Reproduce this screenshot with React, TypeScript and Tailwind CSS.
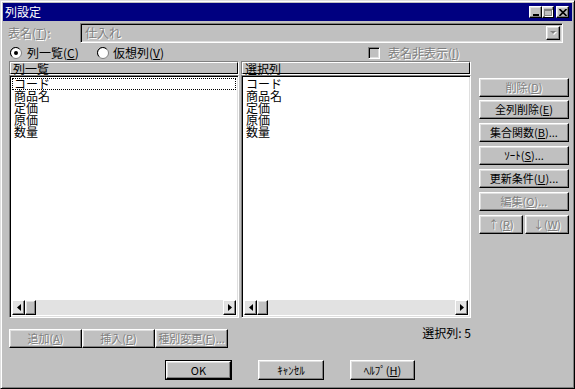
import React from "react";

const font = "font-['Noto_Sans_CJK_JP','Noto_Sans',sans-serif]";
const raised =
  "border border-t-white border-l-white border-b-black border-r-black shadow-[inset_-1px_-1px_#808080,inset_1px_1px_#dfdfdf]";
const sunken =
  "border border-t-[#808080] border-l-[#808080] border-b-white border-r-white shadow-[inset_1px_1px_#000,inset_-1px_-1px_#dfdfdf]";
const grayText = "text-[#808080] [text-shadow:1px_1px_0_#fff]";

type Label = { text: string; k?: string; tail?: string };

const Acc = ({ text, k, tail }: Label) => (
  <span className="whitespace-nowrap">
    {text}
    {k && (
      <>
        (<u>{k}</u>)
      </>
    )}
    {tail}
  </span>
);

const Btn = ({
  label,
  off,
  className = "",
}: {
  label: Label;
  off?: boolean;
  className?: string;
}) => (
  <div
    className={`${raised} flex items-center justify-center h-[19px] text-[11px] leading-none ${
      off ? grayText : "text-black"
    } ${className}`}
  >
    <Acc {...label} />
  </div>
);

const Arrow = ({ dir }: { dir: "left" | "right" }) => (
  <div className={`${raised} w-[13px] h-full flex items-center justify-center`}>
    <svg width="4" height="7" viewBox="0 0 4 7">
      {dir === "left" ? (
        <path d="M4 0 L0 3.5 L4 7 Z" fill="#000" />
      ) : (
        <path d="M0 0 L4 3.5 L0 7 Z" fill="#000" />
      )}
    </svg>
  </div>
);

const items = ["コード", "商品名", "定価", "原価", "数量"];

const ListBox = ({ focus }: { focus?: boolean }) => (
  <div className={`${sunken} h-[243px] flex flex-col p-[2px] bg-white`}>
    <div className="flex-1 text-[12px] leading-[12px] text-black">
      {items.map((it, i) => (
        <div
          key={it}
          className={`h-[12px] pl-[2px] ${
            focus && i === 0 ? "outline outline-1 outline-dotted outline-black -outline-offset-1" : ""
          }`}
        >
          {it}
        </div>
      ))}
    </div>
    <div className="flex h-[15px] bg-[#e2e2e2]">
      <Arrow dir="left" />
      <div className={`${raised} w-[11px] h-full bg-[#c0c0c0]`} />
      <div className="flex-1" />
      <Arrow dir="right" />
    </div>
  </div>
);

const Header = ({ title }: { title: string }) => (
  <div className="h-[14px] border border-t-[#808080] border-l-[#808080] border-b-white border-r-white flex">
    <div className="flex-1 border border-t-white border-l-white border-b-black border-r-black text-[12px] leading-[11px] pl-[2px] text-black">
      {title}
    </div>
  </div>
);

export default function App() {
  return (
    <div
      className={`${font} w-[575px] h-[389px] bg-[#c0c0c0] border border-t-[#dfdfdf] border-l-[#dfdfdf] border-b-black border-r-black shadow-[inset_1px_1px_#fff,inset_-1px_-1px_#808080] p-[2px] flex flex-col select-none`}
    >
      {/* title bar */}
      <div className="h-[18px] bg-[#000080] flex items-center pl-[2px] pr-[3px]">
        <span className="text-white text-[12px] leading-none">列設定</span>
        <div className="ml-auto flex items-center">
          <div className={`${raised} w-[13px] h-[12px] bg-[#c0c0c0] flex items-end justify-center pb-[1px]`}>
            <div className="w-[6px] h-[2px] bg-black" />
          </div>
          <div className={`${raised} w-[12px] h-[12px] bg-[#c0c0c0] flex items-center justify-center`}>
            <div className="w-[8px] h-[7px] border border-[#808080] border-t-2 shadow-[1px_1px_#fff]" />
          </div>
          <div className={`${raised} ml-[2px] w-[13px] h-[12px] bg-[#c0c0c0] flex items-center justify-center`}>
            <svg width="8" height="7" viewBox="0 0 8 7">
              <path d="M0.5 0 L7.5 7 M7.5 0 L0.5 7" stroke="#000" strokeWidth="1.6" />
            </svg>
          </div>
        </div>
      </div>

      {/* table name */}
      <div className="mt-[2px] h-[20px] flex items-center pl-[5px]">
        <div className={`w-[72px] text-[12px] ${grayText}`}>
          <Acc text="表名" k="T" tail=":" />
        </div>
        <div className={`${sunken} w-[483px] h-[20px] flex items-center pl-[4px] pr-[2px]`}>
          <span className={`text-[12px] ${grayText}`}>仕入れ</span>
          <div className={`${raised} ml-auto w-[14px] h-[14px] flex items-center justify-center`}>
            <svg width="7" height="5" viewBox="0 0 7 5">
              <path d="M1 1 L7 1 L4 4 Z" fill="#fff" />
              <path d="M0 0 L6 0 L3 3 Z" fill="#808080" />
            </svg>
          </div>
        </div>
      </div>

      {/* radio row */}
      <div className="h-[18px] pt-[2px] flex items-center pl-[7px] text-[12px]">
        <div className="w-[358px] flex items-center">
          <div className="w-[87px] flex items-center">
            <svg width="12" height="12" viewBox="0 0 12 12">
              <circle cx="6" cy="6" r="5.5" fill="#fff" stroke="#808080" />
              <path d="M2 9.5 A5 5 0 0 1 9.5 2" fill="none" stroke="#000" />
              <circle cx="6" cy="6" r="2" fill="#000" />
            </svg>
            <span className="ml-[5px] text-black">
              <Acc text="列一覧" k="C" />
            </span>
          </div>
          <svg width="12" height="12" viewBox="0 0 12 12">
            <circle cx="6" cy="6" r="5.5" fill="#fff" stroke="#808080" />
            <path d="M2 9.5 A5 5 0 0 1 9.5 2" fill="none" stroke="#000" />
          </svg>
          <span className="ml-[4px] text-black">
            <Acc text="仮想列" k="V" />
          </span>
        </div>
        <div className={`w-[12px] h-[12px] ${sunken}`} />
        <span className={`ml-[8px] ${grayText}`}>
          <Acc text="表名非表示" k="I" />
        </span>
      </div>

      {/* lists + side buttons */}
      <div className="flex pl-[6px]">
        <div className="flex gap-[2px]">
          <div className="w-[230px] flex flex-col">
            <Header title="列一覧" />
            <ListBox focus />
          </div>
          <div className="w-[230px] flex flex-col">
            <Header title="選択列" />
            <ListBox />
          </div>
        </div>
        <div className="ml-[8px] w-[90px] flex flex-col pt-[17px]">
          <Btn off label={{ text: "削除", k: "D" }} />
          <Btn className="mt-[3px]" label={{ text: "全列削除", k: "E" }} />
          <Btn className="mt-[4px]" label={{ text: "集合関数", k: "B", tail: "..." }} />
          <Btn className="mt-[4px]" label={{ text: "ｿｰﾄ", k: "S", tail: "..." }} />
          <Btn className="mt-[4px]" label={{ text: "更新条件", k: "U", tail: "..." }} />
          <Btn className="mt-[4px]" off label={{ text: "編集", k: "O", tail: "..." }} />
          <div className="mt-[4px] flex gap-[2px]">
            <Btn className="w-[44px]" off label={{ text: "↑", k: "R" }} />
            <Btn className="w-[44px]" off label={{ text: "↓", k: "W" }} />
          </div>
        </div>
      </div>

      {/* bottom row */}
      <div className="mt-[11px] w-[468px] pl-[6px] flex items-start">
        <div className="flex">
          <Btn className="w-[73px]" off label={{ text: "追加", k: "A" }} />
          <Btn className="w-[73px]" off label={{ text: "挿入", k: "P" }} />
          <Btn className="w-[73px]" off label={{ text: "種別変更", k: "F", tail: "..." }} />
        </div>
        <div className="ml-auto -mt-[3px] text-[12px] leading-[14px] text-black whitespace-nowrap">
          選択列: 5
        </div>
      </div>

      {/* dialog buttons */}
      <div className="mt-[12px] pl-[162px] flex gap-[26px]">
        <div className="w-[67px] h-[20px] border border-black">
          <Btn className="h-full" label={{ text: "OK" }} />
        </div>
        <Btn className="w-[66px] h-[20px]" label={{ text: "ｷｬﾝｾﾙ" }} />
        <Btn className="w-[65px] h-[20px]" label={{ text: "ﾍﾙﾌﾟ", k: "H" }} />
      </div>
    </div>
  );
}
